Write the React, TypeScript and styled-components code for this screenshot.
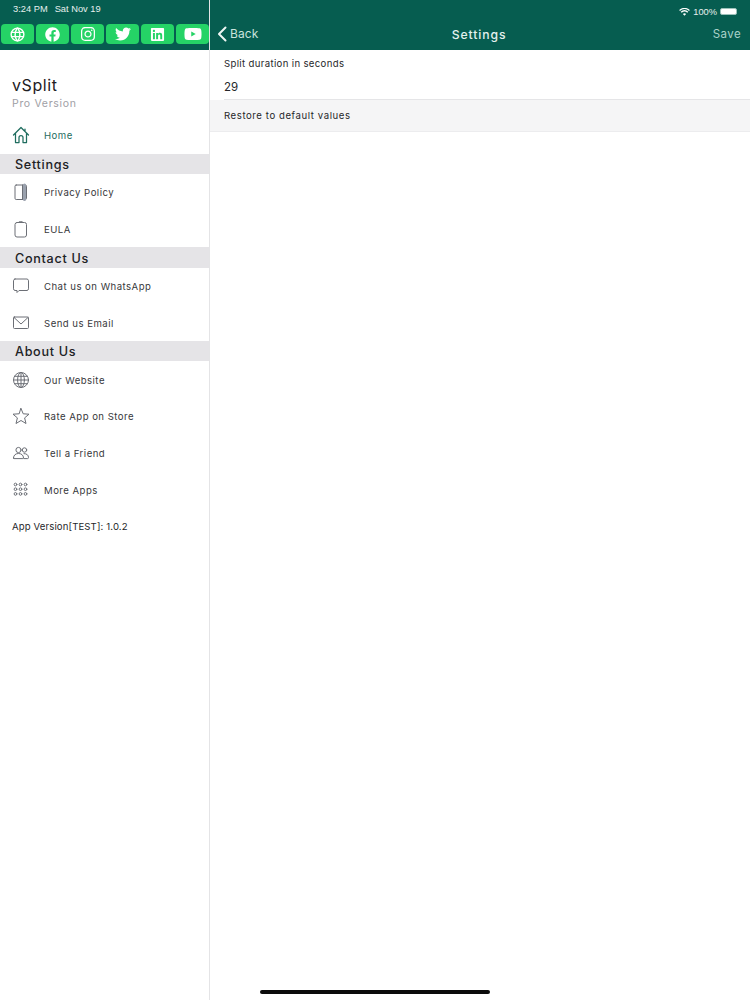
import React from "react";
import styled, { createGlobalStyle } from "styled-components";
import { FaFacebook, FaInstagram, FaTwitter, FaLinkedin, FaYoutube } from "react-icons/fa";
import { TbWorld } from "react-icons/tb";

const Global = createGlobalStyle`
  html, body { margin: 0; padding: 0; background: #fff; }
  body { font-family: "Inter", "Liberation Sans", sans-serif; color: #26282b; }
`;

const Page = styled.div`
  width: 750px; height: 1000px; display: flex; position: relative; overflow: hidden; background: #fff;
`;
const Sidebar = styled.aside`
  width: 209px; flex: none; border-right: 1px solid #e4e4e6; display: flex; flex-direction: column;
`;
const SideHeader = styled.header`
  height: 50px; background: #065d50; display: flex; flex-direction: column; box-sizing: border-box; padding: 3px 0 6px 1px;
`;
const StatusText = styled.div`
  height: 21px; display: flex; gap: 7px; font: 400 9.3px "Liberation Sans", sans-serif; color: #e6f0ee; padding: 0 0 0 12px; line-height: 12px;
`;
const Socials = styled.div`
  display: flex; gap: 2px;
`;
const SocialButton = styled.div`
  width: 33px; height: 20px; flex: none; border-radius: 4px; background: #25d366; color: #fff; display: flex; align-items: center; justify-content: center;
`;
const Brand = styled.div`
  height: 67px; box-sizing: border-box; padding: 26px 12px 0; display: flex; flex-direction: column;
`;
const BrandName = styled.div`
  font-size: 16px; font-weight: 400; line-height: 18px; letter-spacing: 0.6px; color: #1e2023;
`;
const BrandSub = styled.div`
  font-size: 10.5px; font-weight: 400; line-height: 19px; letter-spacing: 0.68px; color: #a0a0a5;
`;
const Row = styled.div<{ $active?: boolean }>`
  height: 36.6px; display: flex; align-items: center; padding-left: 12px; gap: 14px; font-size: 9.6px; font-weight: 400; letter-spacing: 0.47px; color: ${p => (p.$active ? "#1f6d5f" : "#37383b")};
`;
const RowLabel = styled.span`
  padding-top: 1px;
`;
const IconSlot = styled.svg<{ $active?: boolean }>`
  width: 18px; height: 18px; flex: none; fill: none; stroke: ${p => (p.$active ? "#1f6d5f" : "#6c6f76")}; stroke-width: ${p => (p.$active ? 1.25 : 1)}; stroke-linecap: round; stroke-linejoin: round;
`;
const Section = styled.div`
  height: 20.5px; box-sizing: border-box; padding: 1px 0 0 15px; background: #e5e4e7; display: flex; align-items: center; font-size: 12.6px; font-weight: 500; letter-spacing: 0.7px; color: #202124;
`;
const Version = styled.div`
  padding-left: 12px; margin-top: 11px; font-size: 9.6px; font-weight: 400; line-height: 16px; letter-spacing: 0.12px; color: #26272a;
`;
const Main = styled.main`
  flex: 1; display: flex; flex-direction: column;
`;
const TopBar = styled.header`
  height: 50px; background: #065d50; color: #d3e6e2; box-sizing: border-box; padding: 3px 9px 0 7px; display: flex; flex-direction: column;
`;
const TopStatus = styled.div`
  height: 17px; padding-right: 4px; display: flex; justify-content: flex-end; align-items: center; gap: 3px; font: 400 9.3px "Liberation Sans", sans-serif; color: #e6f0ee;
`;
const TopNav = styled.div`
  flex: 1; display: flex; align-items: center; justify-content: space-between; position: relative; padding-bottom: 3px;
`;
const BackLink = styled.div`
  display: flex; align-items: center; gap: 3px; font-size: 12px; font-weight: 400; letter-spacing: 0.1px; color: #c9e3dd;
`;
const BackIcon = styled.svg`
  width: 10px; height: 16px; fill: none; stroke: #eef6f4; stroke-width: 2; stroke-linecap: round; stroke-linejoin: round;
`;
const Title = styled.div`
  position: absolute; left: 0; right: 0; top: 7px; text-align: center; font-size: 12.2px; font-weight: 500; letter-spacing: 0.9px; color: #e4f1ee; pointer-events: none;
`;
const Save = styled.div`
  font-size: 11.5px; font-weight: 400; letter-spacing: 0.4px; color: #a9d2c9;
`;
const Field = styled.div`
  margin-left: 14px; height: 49.5px; box-sizing: border-box; border-bottom: 1px solid #e5e5e7; display: flex; flex-direction: column;
`;
const FieldLabel = styled.div`
  font-size: 9.6px; font-weight: 400; line-height: 14px; padding-top: 7px; letter-spacing: 0.34px; color: #26272a;
`;
const FieldValue = styled.div`
  font-size: 11.5px; font-weight: 400; line-height: 16px; padding-top: 8px; color: #26272a;
`;
const Restore = styled.div`
  height: 32px; box-sizing: border-box; padding: 1px 0 0 14px; background: #f5f5f6; border-bottom: 1px solid #ececee; display: flex; align-items: center; font-size: 9.6px; font-weight: 400; letter-spacing: 0.57px; color: #26272a;
`;
const HomeIndicator = styled.div`
  position: absolute; left: 260px; top: 990px; width: 230px; height: 4px; border-radius: 2px; background: #0b0b0b;
`;
const Battery = styled.span`
  width: 17px; height: 7px; border-radius: 2px; background: #fff; border: 1px solid #9bc1ba; box-sizing: border-box; display: block;
`;

const Ico: React.FC<{ children: React.ReactNode; active?: boolean }> = ({ children, active }) => (
  <IconSlot viewBox="0 0 18 18" $active={active}>{children}</IconSlot>
);

const dots: [number, number][] = [];
for (let y = 3.5; y < 15; y += 4.7) for (let x = 3.5; x < 15; x += 5) dots.push([x, y]);

export default function App() {
  return (
    <Page>
      <Global />
      <Sidebar>
        <SideHeader>
          <StatusText><span>3:24 PM</span><span>Sat Nov 19</span></StatusText>
          <Socials>
            <SocialButton><TbWorld size={17} /></SocialButton>
            <SocialButton><FaFacebook size={15} /></SocialButton>
            <SocialButton><FaInstagram size={16} /></SocialButton>
            <SocialButton><FaTwitter size={16} /></SocialButton>
            <SocialButton><FaLinkedin size={15} /></SocialButton>
            <SocialButton><FaYoutube size={18} /></SocialButton>
          </Socials>
        </SideHeader>
        <Brand>
          <BrandName>vSplit</BrandName>
          <BrandSub>Pro Version</BrandSub>
        </Brand>
        <Row $active>
          <Ico active>
            <path d="M1.5 9 9 1.5 16.5 9M3.5 7.5V16.5H7V11.5a2 2 0 0 1 4 0V16.5H14.5V7.5M13 3v2.5" />
          </Ico>
          <RowLabel>Home</RowLabel>
        </Row>
        <Section>Settings</Section>
        <Row>
          <Ico><rect x="3" y="2" width="11.5" height="14.5" rx="1.2" /><path d="M10.5 2v14.5" /><path d="M12.5 2v14.5" strokeWidth="3" stroke="#9aa1ad" /></Ico>
          <RowLabel>Privacy Policy</RowLabel>
        </Row>
        <Row>
          <Ico><rect x="3" y="2.5" width="11.5" height="14.5" rx="2" /><path d="M6 2.5C6 1.2 11.5 1.2 11.5 2.5" /></Ico>
          <RowLabel>EULA</RowLabel>
        </Row>
        <Section>Contact Us</Section>
        <Row>
          <Ico><path d="M3 2h12a1.8 1.8 0 0 1 1.5 1.8v8A1.8 1.8 0 0 1 15 13.5H7L5 15.5V13.5H3A1.8 1.8 0 0 1 1.5 11.8v-8A1.8 1.8 0 0 1 3 2Z" /></Ico>
          <RowLabel>Chat us on WhatsApp</RowLabel>
        </Row>
        <Row>
          <Ico><rect x="1.5" y="3" width="15" height="11.5" rx="1" /><path d="m2 3.5 7 6.5 7-6.5" /></Ico>
          <RowLabel>Send us Email</RowLabel>
        </Row>
        <Section>About Us</Section>
        <Row>
          <Ico><circle cx="9" cy="9" r="7.5" /><ellipse cx="9" cy="9" rx="3.4" ry="7.5" /><path d="M9 1.5v15M1.5 9h15M2.6 5.3h12.8M2.6 12.7h12.8" /></Ico>
          <RowLabel>Our Website</RowLabel>
        </Row>
        <Row>
          <Ico><path d="m9 1.5 2.2 5.3 5.8.4-4.4 3.7 1.4 5.6L9 13.5l-5 3 1.4-5.6L1 7.2l5.8-.4Z" /></Ico>
          <RowLabel>Rate App on Store</RowLabel>
        </Row>
        <Row>
          <Ico><circle cx="6.5" cy="6" r="2.6" /><circle cx="12.5" cy="6" r="2.2" /><path d="M1.5 14c0-3 2.3-4.5 5-4.5s5 1.5 5 4.5c0 .4-.3.6-.6.6H2c-.3 0-.5-.2-.5-.6ZM12 9.6c2.7 0 4.5 1.4 4.5 4 0 .6-.3 1-.8 1H12" /></Ico>
          <RowLabel>Tell a Friend</RowLabel>
        </Row>
        <Row>
          <Ico>{dots.map(([x, y]) => <circle key={`${x}-${y}`} cx={x} cy={y} r="1.35" />)}</Ico>
          <RowLabel>More Apps</RowLabel>
        </Row>
        <Version>App Version[TEST]: 1.0.2</Version>
      </Sidebar>
      <Main>
        <TopBar>
          <TopStatus>
            <svg width="11" height="8" viewBox="0 0 12 9" fill="#fff"><path d="M6 8.8 4.2 6.8a2.6 2.6 0 0 1 3.6 0ZM2.9 5.4 1.7 4.1a6.2 6.2 0 0 1 8.6 0L9.1 5.4a4.5 4.5 0 0 0-6.2 0ZM.9 3.3 0 2.2a8.7 8.7 0 0 1 12 0l-.9 1.1a7.4 7.4 0 0 0-10.2 0Z" /></svg>
            <span>100%</span>
            <Battery />
          </TopStatus>
          <TopNav>
            <BackLink>
              <BackIcon viewBox="0 0 10 16"><path d="M8.5 1.5 2 8l6.5 6.5" /></BackIcon>
              Back
            </BackLink>
            <Title>Settings</Title>
            <Save>Save</Save>
          </TopNav>
        </TopBar>
        <Field>
          <FieldLabel>Split duration in seconds</FieldLabel>
          <FieldValue>29</FieldValue>
        </Field>
        <Restore>Restore to default values</Restore>
      </Main>
      <HomeIndicator />
    </Page>
  );
}
